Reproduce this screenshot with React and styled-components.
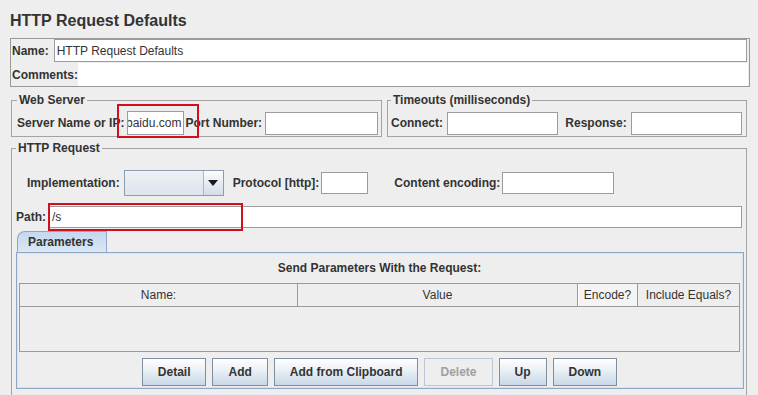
import React from 'react';
import styled, { createGlobalStyle } from 'styled-components';

const GlobalStyle = createGlobalStyle`
  html, body {
    margin: 0;
    padding: 0;
    background: #eeeeee;
  }
  body {
    font-family: "Liberation Sans", Arial, sans-serif;
    font-size: 12px;
    color: #333333;
  }
  * {
    box-sizing: border-box;
  }
`;

const Page = styled.div`
  width: 758px;
  height: 395px;
  overflow: hidden;
  padding: 0 8px 0 10px;
`;

const Title = styled.h1`
  margin: 0;
  height: 38px;
  padding-top: 3px;
  font-size: 16px;
  line-height: 36px;
  font-weight: bold;
`;

const NameBox = styled.div`
  border: 1px solid #9a9a9a;
  display: flex;
  flex-direction: column;
  gap: 1px;
`;

const Line = styled.div`
  display: flex;
  align-items: center;
  height: ${(p) => p.$h || 23}px;
  margin-top: ${(p) => p.$mt || 0}px;
  padding-left: ${(p) => p.$pl || 0}px;
  padding-right: ${(p) => p.$pr || 0}px;
`;

const Label = styled.span`
  font-weight: bold;
  white-space: nowrap;
  margin-left: ${(p) => p.$ml || 0}px;
`;

const TextField = styled.div`
  position: relative;
  display: flex;
  align-items: center;
  justify-content: ${(p) => (p.$scrolled ? 'flex-end' : 'flex-start')};
  overflow: hidden;
  white-space: nowrap;
  height: ${(p) => p.$h || 22}px;
  width: ${(p) => (p.$w ? `${p.$w}px` : 'auto')};
  flex: ${(p) => (p.$w ? '0 0 auto' : '1 1 0')};
  margin-left: ${(p) => p.$ml || 0}px;
  margin-right: ${(p) => p.$mr || 0}px;
  padding: 0 2px;
  background: #ffffff;
  border: 1px solid ${(p) => (p.$plain ? '#ffffff' : '#9c9c9c')};
  font-size: 12px;
  color: #333333;
`;

const Anchor = styled.div`
  position: relative;
  display: flex;
  flex: ${(p) => (p.$grow ? '1 1 0' : '0 0 auto')};
  margin-left: ${(p) => p.$ml || 0}px;
`;

const Mark = styled.div`
  position: absolute;
  top: ${(p) => p.$top}px;
  left: ${(p) => p.$left}px;
  width: ${(p) => p.$w}px;
  height: ${(p) => p.$h}px;
  border: 2px solid #d0111c;
  pointer-events: none;
`;

const GroupRow = styled.div`
  display: flex;
  gap: 5px;
  margin: 6px 3px 0 1px;
`;

const Group = styled.fieldset`
  margin: ${(p) => p.$margin || '0'};
  flex: ${(p) => (p.$w ? `0 0 ${p.$w}px` : '1 1 0')};
  min-width: 0;
  border: 1px solid #a3a3a3;
  padding: ${(p) => p.$pad};
`;

const Legend = styled.legend`
  padding: 0 2px;
  font-weight: bold;
  font-size: 12px;
  line-height: 14px;
  color: #333333;
`;

const Combo = styled.div`
  display: flex;
  width: 100px;
  height: 26px;
  margin-left: 4px;
  border: 1px solid #8d9db0;
  background: linear-gradient(#edf1f5, #dde4ec);
`;

const ComboValue = styled.div`
  flex: 1;
`;

const ComboArrow = styled.div`
  width: 20px;
  display: flex;
  align-items: center;
  justify-content: center;
  border-left: 1px solid #a9b7c6;
  background: linear-gradient(#fbfcfd, #d3dce7);
`;

const Tab = styled.div`
  width: fit-content;
  margin: 3px 0 0 1px;
  height: 21px;
  padding: 0 13px 0 10px;
  display: flex;
  align-items: center;
  font-weight: bold;
  border: 1px solid #8fa8c6;
  border-bottom: none;
  border-top-left-radius: 8px;
  background: linear-gradient(#c3d8ef, #dbe7f4);
`;

const Panel = styled.div`
  border: 1px solid #8fa8c6;
  box-shadow: inset 0 0 0 1px #d7e3ef;
  padding: 0 3px 2px 2px;
  display: flex;
  flex-direction: column;
`;

const PanelTitle = styled.div`
  height: 30px;
  line-height: 30px;
  text-align: center;
  font-weight: bold;
`;

const Table = styled.div`
  border: 1px solid #9a9a9a;
`;

const HeaderRow = styled.div`
  display: grid;
  grid-template-columns: 278px 280px 60px 1fr;
  height: 23px;
  border-bottom: 1px solid #9a9a9a;
`;

const HeaderCell = styled.div`
  display: flex;
  align-items: center;
  justify-content: center;
  border-right: 1px solid #9a9a9a;
  background: ${(p) => (p.$lit ? '#f4f4f4' : '#eeeeee')};
  box-shadow: ${(p) => (p.$lit ? 'inset 1px 0 0 #ffffff' : 'none')};
  color: #333333;
  white-space: nowrap;

  &:last-child {
    border-right: none;
  }
`;

const TableBody = styled.div`
  height: 44px;
`;

const ButtonBar = styled.div`
  display: flex;
  justify-content: center;
  gap: 6px;
  margin-top: 6px;
`;

const Button = styled.div`
  height: 28px;
  padding: 0 15px;
  display: flex;
  align-items: center;
  font-weight: bold;
  white-space: nowrap;
  color: ${(p) => (p.$disabled ? '#a0a0a0' : '#333333')};
  border: 1px solid ${(p) => (p.$disabled ? '#b8c8d8' : '#7f8fa0')};
  background: ${(p) =>
    p.$disabled ? '#eeeeee' : 'linear-gradient(#ffffff 0%, #eef3f8 35%, #c9d8e7 100%)'};
`;

const columns = [
  { name: 'Name:' },
  { name: 'Value' },
  { name: 'Encode?', lit: true },
  { name: 'Include Equals?' },
];

const buttons = [
  { text: 'Detail' },
  { text: 'Add' },
  { text: 'Add from Clipboard' },
  { text: 'Delete', disabled: true },
  { text: 'Up' },
  { text: 'Down' },
];

export default function App() {
  return (
    <Page>
      <GlobalStyle />
      <Title>HTTP Request Defaults</Title>

      <NameBox>
        <Line>
          <Label $ml={1}>Name:</Label>
          <TextField $h={23} $ml={5} $mr={2}>HTTP Request Defaults</TextField>
        </Line>
        <Line>
          <Label $ml={1}>Comments:</Label>
          <TextField $h={23} $ml={0} $mr={1} $plain />
        </Line>
      </NameBox>

      <GroupRow>
        <Group $w={371} $pad="4px 3px 1px 5px">
          <Legend>Web Server</Legend>
          <Line $h={24}>
            <Label>Server Name or IP:</Label>
            <Anchor $ml={3}>
              <TextField $w={57} $h={24} $scrolled>
                <span>baidu.com</span>
              </TextField>
              <Mark $top={-7} $left={-10} $w={82} $h={34} />
            </Anchor>
            <Label $ml={1}>Port Number:</Label>
            <TextField $h={23} $ml={3} />
          </Line>
        </Group>
        <Group $pad="4px 4px 1px 3px">
          <Legend>Timeouts (milliseconds)</Legend>
          <Line $h={24}>
            <Label>Connect:</Label>
            <TextField $h={23} $ml={4} />
            <Label $ml={7}>Response:</Label>
            <TextField $h={23} $ml={4} />
          </Line>
        </Group>
      </GroupRow>

      <Group $margin="4px 3px 0 1px" $pad="15px 2px 20px 4px">
        <Legend>HTTP Request</Legend>
        <Line $h={26} $pl={11}>
          <Label>Implementation:</Label>
          <Combo>
            <ComboValue />
            <ComboArrow>
              <svg width="10" height="6" viewBox="0 0 10 6">
                <polygon points="0,0 10,0 5,6" fill="#1a1a1a" />
              </svg>
            </ComboArrow>
          </Combo>
          <Label $ml={9}>Protocol [http]:</Label>
          <TextField $w={47} $ml={2} />
          <Label $ml={26}>Content encoding:</Label>
          <TextField $w={112} $ml={2} />
        </Line>
        <Line $h={22} $mt={10} $pr={2}>
          <Label>Path:</Label>
          <Anchor $grow $ml={3}>
            <TextField>/s</TextField>
            <Mark $top={-3} $left={-1} $w={195} $h={28} />
          </Anchor>
        </Line>
        <Tab>Parameters</Tab>
        <Panel>
          <PanelTitle>Send Parameters With the Request:</PanelTitle>
          <Table>
            <HeaderRow>
              {columns.map((c) => (
                <HeaderCell key={c.name} $lit={c.lit}>
                  {c.name}
                </HeaderCell>
              ))}
            </HeaderRow>
            <TableBody />
          </Table>
          <ButtonBar>
            {buttons.map((b) => (
              <Button key={b.text} $disabled={b.disabled}>
                {b.text}
              </Button>
            ))}
          </ButtonBar>
        </Panel>
      </Group>
    </Page>
  );
}
